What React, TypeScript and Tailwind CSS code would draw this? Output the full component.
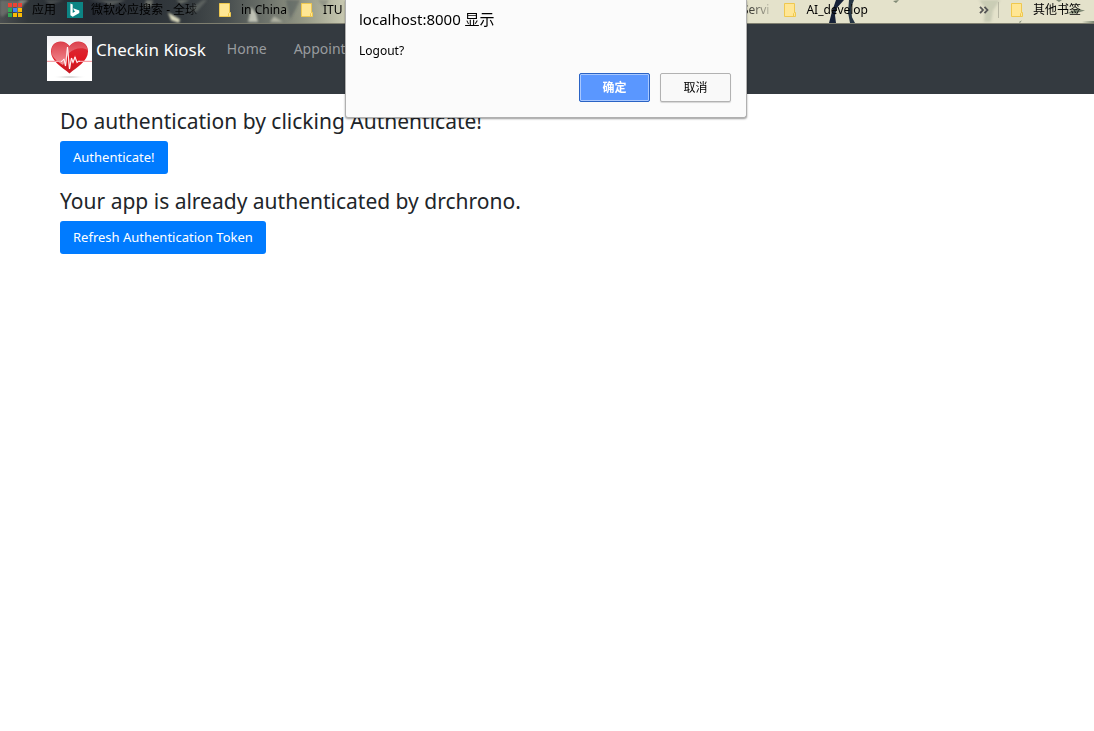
import type { ReactNode } from 'react';

const APP_COLORS = ['#ea4335', '#ea4335', '#ea4335', '#34a853', '#4285f4', '#fbbc05', '#34a853', '#fbbc05', '#fbbc05'];

function AppsIcon() {
  return (
    <svg width="14" height="14" viewBox="0 0 14 14" className="shrink-0" aria-hidden="true" shapeRendering="crispEdges">
      {APP_COLORS.map((color, i) => (
        <rect key={i} x={(i % 3) * 5} y={Math.floor(i / 3) * 5} width="4" height="4" fill={color} />
      ))}
    </svg>
  );
}

function BingIcon() {
  return (
    <svg width="16" height="16" viewBox="0 0 16 16" className="shrink-0" aria-hidden="true">
      <rect width="16" height="16" fill="#0c8484" />
      <path d="M3.4 1.6 5.7 2.5V10.9L8.3 9.2 7 8.5 6.2 6.2 12.3 8.4V11L5.7 14.7 3.4 13.2Z" fill="#fff" />
    </svg>
  );
}

function FolderIcon() {
  return (
    <svg width="12" height="14" viewBox="0 0 12 14" className="shrink-0" aria-hidden="true">
      <path d="M.5.5H10.5V9.5H11.5V13.5H.5Z" fill="#ffe694" stroke="#efc84f" />
      <path d="M9.5 13.5V10.5L10.5 9.5" fill="none" stroke="#efc84f" />
    </svg>
  );
}

function HeartLogo() {
  return (
    <svg width="45" height="45" viewBox="0 0 45 45" className="shrink-0" aria-hidden="true">
      <defs>
        <linearGradient id="paper" x2="0" y2="1">
          <stop offset="0" stopColor="#f1f1f4" />
          <stop offset=".4" stopColor="#fff" />
        </linearGradient>
        <linearGradient id="heart" x2="0" y2="1">
          <stop offset="0" stopColor="#d9303c" />
          <stop offset=".55" stopColor="#e01822" />
          <stop offset="1" stopColor="#c51b25" />
        </linearGradient>
        <linearGradient id="gloss" x2="0" y2="1">
          <stop offset="0" stopColor="#dc4550" />
          <stop offset="1" stopColor="#f5a3a8" />
        </linearGradient>
        <radialGradient id="shade">
          <stop offset="0" stopColor="#b5b5b5" />
          <stop offset="1" stopColor="#fff" stopOpacity="0" />
        </radialGradient>
      </defs>
      <rect width="45" height="45" fill="url(#paper)" />
      <ellipse cx="22.5" cy="41" rx="17" ry="1.6" fill="url(#shade)" />
      <path d="M22.5 37.500C15 31 4 25 4 15.500 4 9 8.500 5.500 13.500 5.500 17.500 5.500 20.500 7.500 22.500 10 24.500 7.500 27.500 5.500 31.500 5.500 36.500 5.500 41 9 41 15.500 41 25 30 31 22.500 37.500Z" fill="url(#heart)" />
      <path d="M5 19C3 10 8 6 13.500 6 17.500 6 20.500 8 22.500 10.500 24.500 8 27.500 6 31.500 6 36 6 40 9 40.500 14 36 11 27 12 22 17 19 21 18 26 16 29 11 26 7 23 5 19Z" fill="url(#gloss)" opacity=".85" />
      <path d="M0 25.300H15L17 23 18.500 30 20.500 11 22.500 33 24.500 22 26 26.500 28 21 30 26.500 31.500 25.300H45" fill="none" stroke="#f5a0a6" strokeWidth="1.200" />
      <path d="M14 25.300H15L17 23 18.500 30 20.500 11 22.500 33 24.500 22 26 26.500 28 21 30 26.500 31.500 25.300H33" fill="none" stroke="#fff" strokeOpacity=".8" strokeLinejoin="round" />
    </svg>
  );
}

function ThemeArt() {
  return (
    <svg className="absolute inset-0 h-full w-full" viewBox="0 0 1094 24" preserveAspectRatio="none" aria-hidden="true">
      <defs>
        <linearGradient id="sky">
          <stop offset="0" stopColor="#4a4e50" />
          <stop offset=".025" stopColor="#30363a" />
          <stop offset=".08" stopColor="#252a32" />
          <stop offset=".17" stopColor="#343a3e" />
          <stop offset=".21" stopColor="#4b5151" />
          <stop offset=".25" stopColor="#747970" />
          <stop offset=".28" stopColor="#989b88" />
          <stop offset=".32" stopColor="#d0d0b8" />
          <stop offset=".4" stopColor="#e4e2cb" />
          <stop offset="1" stopColor="#e4e2cb" />
        </linearGradient>
        <filter id="soft" x="-20%" y="-50%" width="140%" height="200%">
          <feGaussianBlur stdDeviation="1" />
        </filter>
      </defs>
      <rect width="1094" height="24" fill="url(#sky)" />
      <g filter="url(#soft)">
        <path d="M0 0H28L20 3 8 13 2 18 0 15Z" fill="#9a9c8e" opacity=".4" />
        <path d="M20 0 29 0 24 4 18 14 15 12Z" fill="#b5b6a7" opacity=".5" />
        <path d="M44 0H64L51 5Z" fill="#858980" opacity=".3" />
        <path d="M88 0H126L111 6 103 2Z" fill="#8a8e85" opacity=".45" />
        <path d="M146 0H153L152 6 144 8Z" fill="#a8aa98" opacity=".5" />
        <path d="M168 13 180 20 179 24 171 21Z" fill="#d8d7bb" />
        <path d="M176 0 190 0 181 4Z" fill="#929689" opacity=".6" />
        <path d="M188 11 203 0H207L197 12Z" fill="#8c9086" opacity=".4" />
        <path d="M248 23 251 7 256 14 258 23Z" fill="#d6d8c9" opacity=".8" />
        <path d="M270 23 274 17 283 23Z" fill="#c7c9b7" opacity=".7" />
        <path d="M286 0H300L295 11 290 20Z" fill="#454e51" opacity=".45" />
        <path d="M318 0H329L324 8Z" fill="#777e76" opacity=".5" />
        <path d="M979 0H1000L993 11 991 23 984 23 985 8Z" fill="#8f9a86" opacity=".3" />
      </g>
      <path d="M836 0H844L837 8 835 16 836 24H829L832 12Z" fill="#172238" />
      <path d="M849 0H854L851 8 852 18 855 24H850L848 13Z" fill="#273644" />
      <path d="M893 1 899 0 896 3Z M1019 23 1022 21 1020 24Z M1066 14 1077 9 1085 11 1075 14Z M1056 0H1062L1059 2Z M1082 23 1094 22V24Z" fill="#7f8975" />
    </svg>
  );
}

function Bookmark({ icon, children }: { icon: ReactNode; children: ReactNode }) {
  return (
    <a href="#" className="flex shrink-0 items-center gap-[10px] whitespace-nowrap">
      {icon}
      {children}
    </a>
  );
}

function BookmarkBar() {
  return (
    <nav aria-label="Bookmarks" className="relative h-6 overflow-hidden border-b border-[#7f7f70] text-xs text-black">
      <ThemeArt />
      <div className="relative flex h-[19px] items-center pr-[13px] pl-2">
        <Bookmark icon={<AppsIcon />}>应用</Bookmark>
        <a href="#" className="ml-[11px] flex w-[140px] shrink-0 items-center gap-2 whitespace-nowrap">
          <BingIcon />
          <span className="[mask-image:linear-gradient(to_right,black_90%,#0008)]">微软必应搜索 - 全球</span>
        </a>
        <div className="ml-3 flex grow gap-[14px]">
          <Bookmark icon={<FolderIcon />}>in China</Bookmark>
          <Bookmark icon={<FolderIcon />}>ITU</Bookmark>
        </div>
        <a href="#" className="mr-[15px] [mask-image:linear-gradient(to_right,black,#0003)]">Servi</a>
        <Bookmark icon={<FolderIcon />}>AI_develop</Bookmark>
        <button type="button" aria-label="More bookmarks" className="mr-[9px] ml-[111px]">
          <svg width="10" height="8" viewBox="0 0 10 8" fill="none" stroke="#555" strokeWidth="1.800">
            <path d="M1 .8 4 4 1 7.200M5.500 .8 8.500 4 5.500 7.200" />
          </svg>
        </button>
        <span className="mr-3 h-4 w-px bg-[#b7b6a3]" />
        <Bookmark icon={<FolderIcon />}>其他书签</Bookmark>
      </div>
    </nav>
  );
}

function LogoutDialog() {
  return (
    <div className="pointer-events-none absolute inset-x-0 top-0 flex justify-center pr-[2px]">
      <div
        role="dialog"
        aria-labelledby="dialog-title"
        className="pointer-events-auto w-[402px] rounded-b-[3px] border border-t-0 border-[#b0b0b0] bg-[#fbfbfb] px-[13px] pt-[9px] pb-[15px] text-black shadow-[0_1px_2px_rgba(0,0,0,0.4)]"
      >
        <h2 id="dialog-title" className="text-[15px] leading-5">localhost:8000 显示</h2>
        <p className="mt-3 text-xs leading-5">Logout?</p>
        <div className="mt-3 flex justify-end gap-[10px] pr-[2px] text-xs">
          <button type="button" className="h-[29px] w-[71px] rounded-[2px] border border-[#2a63c4] bg-[#5a97ff] font-bold text-white inset-ring inset-ring-[#a9c8ff]">确定</button>
          <button type="button" className="h-[29px] w-[71px] rounded-[2px] border border-[#b2b2b2] bg-[#f9f9f9] shadow-[0_1px_1px_rgba(0,0,0,0.15)]">取消</button>
        </div>
      </div>
    </div>
  );
}

function AuthSection({ title, action }: { title: string; action: string }) {
  return (
    <section>
      <h2 className="text-[21px] leading-7 font-[450]">{title}</h2>
      <button type="button" className="mt-[6px] h-[33px] rounded-[3px] bg-[#007bff] px-[13px] pt-px text-[13px] text-white">{action}</button>
    </section>
  );
}

export default function App() {
  return (
    <div className="relative min-h-screen bg-white font-['Noto_Sans','Noto_Sans_CJK_SC',sans-serif] text-[#212529]">
      <BookmarkBar />
      <header className="bg-[#343a40] px-[47px] pt-3 pb-[13px]">
        <nav className="flex items-start" aria-label="Main">
          <a href="#" className="flex items-start gap-1 text-[17px] leading-[27px] text-white">
            <HeartLogo />
            Checkin Kiosk
          </a>
          <a href="#" className="ml-[21px] text-sm leading-[26px] text-[#999c9f]">Home</a>
          <a href="#" className="ml-[27px] text-sm leading-[26px] text-[#999c9f]">Appoint</a>
        </nav>
      </header>
      <main className="flex flex-col gap-[13px] px-[60px] pt-[13px]">
        <AuthSection title="Do authentication by clicking Authenticate!" action="Authenticate!" />
        <AuthSection title="Your app is already authenticated by drchrono." action="Refresh Authentication Token" />
      </main>
      <LogoutDialog />
    </div>
  );
}
